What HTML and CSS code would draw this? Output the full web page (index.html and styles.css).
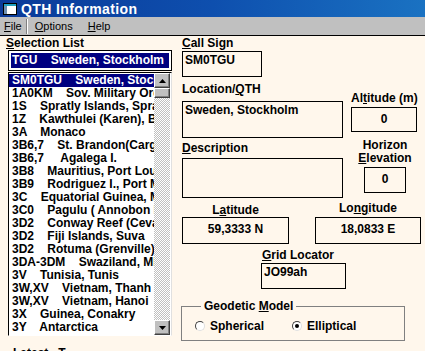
FILE: index.html
```html
<!DOCTYPE html>
<html lang="en">
<head>
  <meta charset="UTF-8" />
  <title>QTH Information</title>
  <link rel="stylesheet" href="styles.css">
</head>
<body>

  <!-- Barra de titulo -->
  <div class="titlebar">
    <svg class="app-icon" width="14" height="12" viewBox="0 0 14 12">
      <rect x="0.5" y="0.5" width="13" height="11" fill="#fff" stroke="#000"/>
      <rect x="1" y="1" width="12" height="2" fill="#20a0c0"/>
      <rect x="1" y="3" width="3" height="8" fill="#7090b0"/>
    </svg>
    <span>QTH Information</span>
  </div>

  <!-- Menu -->
  <div class="menubar">
    <span class="menu"><u>F</u>ile</span>
    <span class="menu-sep"></span>
    <span class="menu"><u>O</u>ptions</span>
    <span class="menu"><u>H</u>elp</span>
  </div>

  <div class="main">

    <!-- Lista -->
    <div class="left">
      <div class="lbl sel-lbl"><u>S</u>election List</div>
      <div class="combo">
        <div class="combo-sel">TGU    Sweden, Stockholm</div>
      </div>
      <div class="listbox">
        <div class="items">
          <div class="item active">SM0TGU    Sweden, Stockholm</div>
          <div class="item">1A0KM    Sov. Military Order of Malta</div>
          <div class="item">1S    Spratly Islands, Spratly</div>
          <div class="item">1Z    Kawthulei (Karen), Burma</div>
          <div class="item">3A    Monaco</div>
          <div class="item">3B6,7    St. Brandon(Cargados)</div>
          <div class="item">3B6,7     Agalega I.</div>
          <div class="item">3B8    Mauritius, Port Louis</div>
          <div class="item">3B9    Rodriguez I., Port Mathurin</div>
          <div class="item">3C    Equatorial Guinea, Malabo</div>
          <div class="item">3C0    Pagulu ( Annobon I.)</div>
          <div class="item">3D2    Conway Reef (Ceva-i-Ra)</div>
          <div class="item">3D2    Fiji Islands, Suva</div>
          <div class="item">3D2    Rotuma (Grenville)</div>
          <div class="item">3DA-3DM    Swaziland, Mbabane</div>
          <div class="item">3V    Tunisia, Tunis</div>
          <div class="item">3W,XV    Vietnam, Thanh Pho</div>
          <div class="item">3W,XV    Vietnam, Hanoi</div>
          <div class="item">3X    Guinea, Conakry</div>
          <div class="item">3Y    Antarctica</div>
        </div>
        <div class="scrollbar">
          <div class="sb-btn">
            <svg width="7" height="4" viewBox="0 0 7 4"><polygon points="3.5,0 7,4 0,4" fill="#000"/></svg>
          </div>
          <div class="sb-thumb"></div>
          <div class="sb-track"></div>
          <div class="sb-btn">
            <svg width="7" height="4" viewBox="0 0 7 4"><polygon points="0,0 7,0 3.5,4" fill="#000"/></svg>
          </div>
        </div>
      </div>
      <div class="latest">Latest   T</div>
    </div>

    <!-- Campos -->
    <div class="right">

      <div class="row">
        <div class="field">
          <div class="lbl"><u>C</u>all Sign</div>
          <div class="box box-call">SM0TGU</div>
        </div>
      </div>

      <div class="row row-loc">
        <div class="field">
          <div class="lbl">Location/<u>Q</u>TH</div>
          <div class="box box-wide box-loc">Sweden, Stockholm</div>
        </div>
        <div class="field field-alt">
          <div class="lbl">Al<u>t</u>itude (m)</div>
          <div class="box box-alt center">0</div>
        </div>
      </div>

      <div class="row">
        <div class="field">
          <div class="lbl lbl-desc"><u>D</u>escription</div>
          <div class="box box-wide box-desc"></div>
        </div>
        <div class="field field-elev">
          <div class="lbl center">Horizon</div>
          <div class="lbl center"><u>E</u>levation</div>
          <div class="box box-elev center">0</div>
        </div>
      </div>

      <div class="row">
        <div class="field field-lat">
          <div class="lbl center">L<u>a</u>titude</div>
          <div class="box box-coord center">59,3333 N</div>
        </div>
        <div class="field field-lon">
          <div class="lbl center">Lo<u>ng</u>itude</div>
          <div class="box box-coord center">18,0833 E</div>
        </div>
      </div>

      <div class="row">
        <div class="field field-grid">
          <div class="lbl"><u>G</u>rid Locator</div>
          <div class="box box-grid">JO99ah</div>
        </div>
      </div>

      <fieldset class="group">
        <legend>Geodetic <u>M</u>odel</legend>
        <label class="radio"><span class="dot"></span>Spherical</label>
        <label class="radio"><span class="dot checked"></span>Elliptical</label>
      </fieldset>

    </div>
  </div>

</body>
</html>
```

FILE: styles.css
```css
* { margin: 0; padding: 0; box-sizing: border-box; }
body {
  width: 425px;
  height: 351px;
  overflow: hidden;
  font-family: "Liberation Sans", Arial, sans-serif;
  font-size: 12px;
  font-weight: bold;
  color: #000;
  background-color: #fff7ec;
}
u { text-decoration: underline; text-underline-offset: 1px; }

.titlebar {
  height: 17px;
  display: flex;
  align-items: center;
  padding-left: 3px;
  gap: 4px;
  color: #fff;
  font-size: 14px;
  letter-spacing: 0.4px;
  background: linear-gradient(to right, #0a3a98, #0e4fae 50%, #1a72c2);
}

.menubar {
  height: 19px;
  display: flex;
  align-items: center;
  background-color: #c0c0c0;
  border-bottom: 1px solid #000;
  font-weight: normal;
  font-size: 11px;
}
.menu { padding: 0 4px; }
.menu:nth-child(3) { margin-left: 3px; padding-right: 11px; }
.menu-sep {
  width: 2px;
  height: 15px;
  border-left: 1px solid #808080;
  border-right: 1px solid #fff;
}

.main {
  display: flex;
  padding-top: 1px;
}

.left {
  width: 164px;
  margin-left: 8px;
}
.lbl { height: 13px; line-height: 13px; white-space: nowrap; }
.sel-lbl { margin-left: -2px; }

.combo {
  height: 21px;
  border: 1px solid #000;
  background: #fff;
  padding: 2px;
}
.combo-sel {
  height: 15px;
  line-height: 15px;
  background: #000080;
  color: #fff;
  padding-left: 1px;
  white-space: pre;
}

.listbox {
  margin-top: 1px;
  height: 264px;
  display: flex;
  background: #fff;
  border: 1px solid #000;
  border-bottom-color: #fff;
  border-right-color: #e0e0e0;
}
.items {
  flex: 1;
  overflow: hidden;
  padding-top: 1px;
}
.item {
  height: 13px;
  line-height: 13px;
  padding-left: 3px;
  white-space: pre;
}
.item.active { background: #000080; color: #fff; }

.scrollbar {
  width: 16px;
  display: flex;
  flex-direction: column;
  margin-right: 1px;
}
.sb-btn, .sb-thumb {
  background: #c0c0c0;
  border: 1px solid;
  border-color: #fff #404040 #404040 #fff;
  box-shadow: inset -1px -1px 0 #808080;
}
.sb-btn {
  height: 15px;
  display: flex;
  align-items: center;
  justify-content: center;
}
.sb-thumb { height: 10px; }
.sb-track {
  flex: 1;
  background: repeating-conic-gradient(#c0c0c0 0 25%, #fff 0 50%) 0 0 / 2px 2px;
}

.latest {
  margin-top: 10px;
  margin-left: 5px;
  white-space: pre;
}

.right {
  margin-left: 10px;
  width: 240px;
}
.row { display: flex; }
.field { display: flex; flex-direction: column; }
.center { text-align: center; }

.box {
  border: 1px solid #000;
  padding: 1px 2px;
  line-height: 14px;
  white-space: nowrap;
}
.box.center { padding-top: 4px; }

.box-call { margin-top: 1px; width: 80px; height: 26px; }

.row-loc { margin-top: 6px; }
.box-wide { width: 161px; }
.box-loc { margin-top: 5px; height: 37px; }
.field-alt { margin-left: 8px; margin-top: 9px; }
.box-alt { margin-top: 2px; width: 66px; height: 25px; }

.lbl-desc { margin-top: 4px; }
.box-desc { margin-top: 3px; height: 40px; }
.field-elev { width: 70px; margin-left: 7px; margin-top: 1px; align-items: center; }
.box-elev { margin-top: 2px; width: 42px; height: 26px; }

.field-lat { width: 107px; margin-top: 6px; }
.field-lon { width: 106px; margin-left: 26px; margin-top: 4px; }
.field-lon .box-coord { margin-top: 2px; }
.box-coord { height: 27px; }

.field-grid { margin-left: 79px; margin-top: 5px; }
.field-grid .lbl { padding-left: 1px; }
.box-grid { margin-top: 1px; width: 85px; height: 26px; }

.group {
  margin-top: 11px;
  margin-left: -1px;
  width: 224px;
  height: 41px;
  border: 1px solid #808080;
  display: flex;
  align-items: center;
  padding: 0 0 2px 13px;
}
.group legend {
  margin-left: 6px;
  padding: 0 3px;
  line-height: 13px;
}
.radio {
  display: flex;
  align-items: center;
  gap: 5px;
  margin-right: 28px;
}
.dot {
  width: 10px;
  height: 10px;
  border-radius: 50%;
  border: 1px solid;
  border-color: #404040 #e0e0e0 #e0e0e0 #404040;
  background: #fff;
  display: flex;
  align-items: center;
  justify-content: center;
}
.dot.checked::after {
  content: "";
  width: 4px;
  height: 4px;
  border-radius: 50%;
  background: #000;
}
```
